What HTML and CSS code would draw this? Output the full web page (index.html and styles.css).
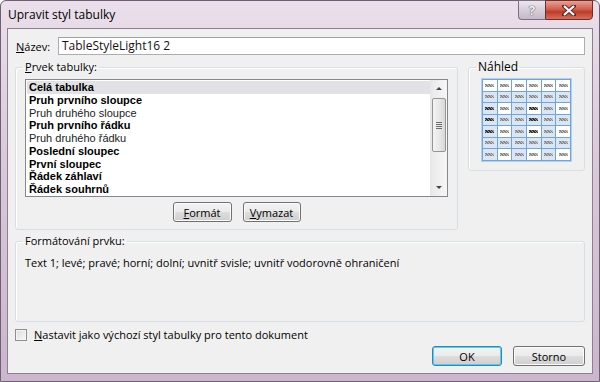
FILE: index.html
```html
<!DOCTYPE html>
<html lang="cs">
<head>
  <meta charset="UTF-8" />
  <title>Upravit styl tabulky</title>
  <link rel="stylesheet" href="styles.css">
</head>
<body>

  <div class="window">
    <div class="titlebar">
      <div class="title">Upravit styl tabulky</div>
      <div class="caption-buttons">
        <div class="cap-help">?</div>
        <div class="cap-close">
          <svg width="14" height="11" viewBox="0 0 14 11">
            <path d="M2 1 L12 10 M12 1 L2 10" stroke="#5b2a26" stroke-width="4" stroke-linecap="square"/>
            <path d="M2 1 L12 10 M12 1 L2 10" stroke="#ffffff" stroke-width="2.2"/>
          </svg>
        </div>
      </div>
    </div>

    <div class="client">
      <div class="name-row">
        <label class="name-label"><u>N</u>ázev:</label>
        <div class="text-input">TableStyleLight16 2</div>
      </div>

      <div class="groups-row">
        <fieldset class="group group-element">
          <legend><u>P</u>rvek tabulky:</legend>
          <div class="group-body">
            <div class="listbox">
              <div class="list-items">
                <div class="item bold selected">Celá tabulka</div>
                <div class="item bold">Pruh prvního sloupce</div>
                <div class="item">Pruh druhého sloupce</div>
                <div class="item bold">Pruh prvního řádku</div>
                <div class="item">Pruh druhého řádku</div>
                <div class="item bold">Poslední sloupec</div>
                <div class="item bold">První sloupec</div>
                <div class="item bold">Řádek záhlaví</div>
                <div class="item bold">Řádek souhrnů</div>
              </div>
              <div class="scrollbar">
                <div class="sb-arrow"><span class="tri-up"></span></div>
                <div class="sb-track">
                  <div class="sb-thumb">
                    <span></span><span></span><span></span><span></span>
                  </div>
                </div>
                <div class="sb-arrow"><span class="tri-down"></span></div>
              </div>
            </div>
            <div class="group-buttons">
              <button class="btn btn-small"><u>F</u>ormát</button>
              <button class="btn btn-small btn-wide"><u>V</u>ymazat</button>
            </div>
          </div>
        </fieldset>

        <fieldset class="group group-preview">
          <legend>Náhled</legend>
          <div class="preview" id="preview"></div>
        </fieldset>
      </div>

      <fieldset class="group group-format">
        <legend>Formátování prvku:</legend>
        <div class="format-text">Text 1; levé; pravé; horní; dolní; uvnitř svisle; uvnitř vodorovně ohraničení</div>
      </fieldset>

      <div class="check-row">
        <span class="checkbox"></span>
        <span><u>N</u>astavit jako výchozí styl tabulky pro tento dokument</span>
      </div>

      <div class="dialog-buttons">
        <button class="btn btn-ok">OK</button>
        <button class="btn btn-cancel">Storno</button>
      </div>
    </div>
  </div>

  <script>
    // 7 rows x 6 columns, 1 = light blue band
    const bands = [
      [0,0,0,0,0,0],
      [1,1,1,1,1,1],
      [1,0,1,0,1,0],
      [1,1,1,1,1,1],
      [1,0,1,0,1,0],
      [1,1,1,1,1,1],
      [1,0,1,0,1,0]
    ];
    const preview = document.getElementById('preview');
    bands.forEach(function (row, r) {
      row.forEach(function (band, c) {
        const cell = document.createElement('div');
        cell.className = band ? 'cell band' : 'cell';
        const dots = document.createElement('span');
        // darker sample text in the middle rows, like the reference
        dots.className = (r >= 2 && r <= 4 && c % 3 === 0) ? 'dots dark' : 'dots';
        cell.appendChild(dots);
        preview.appendChild(cell);
      });
    });
  </script>

</body>
</html>
```

FILE: styles.css
```css
* { margin: 0; padding: 0; box-sizing: border-box; }

body {
  font-family: 'Open Sans', 'DejaVu Sans', sans-serif;
  font-size: 11px;
  color: #000;
  width: 600px;
  height: 382px;
  overflow: hidden;
}

.window {
  width: 600px;
  height: 382px;
  background: linear-gradient(#ebdfeb, #dacada 40%, #cbb6cd);
  border: 1px solid #6e6072;
  border-radius: 6px 6px 0 0;
  display: flex;
  flex-direction: column;
}

/* Title bar */
.titlebar {
  height: 27px;
  display: flex;
  justify-content: space-between;
  align-items: flex-start;
}

.title {
  font-size: 12px;
  padding: 5px 0 0 7px;
  color: #000;
}

.caption-buttons {
  display: flex;
  margin-top: -1px;
  margin-right: 6px;
}

.cap-help {
  width: 27px;
  height: 20px;
  border: 1px solid #7d6f80;
  border-right: none;
  border-radius: 0 0 0 4px;
  background: linear-gradient(#ece6ee, #d8cdda 50%, #c6b8c9);
  color: #f6f6f6;
  font-weight: bold;
  font-size: 13px;
  line-height: 18px;
  text-align: center;
  text-shadow: 0 0 1px #444, 0 0 1px #444;
}

.cap-close {
  width: 48px;
  height: 20px;
  border: 1px solid #6d2d28;
  border-radius: 0 0 4px 0;
  background: linear-gradient(#e7a196, #d2604f 45%, #c03a28 60%, #d2705c);
  display: flex;
  align-items: center;
  justify-content: center;
}

/* Client area */
.client {
  margin: 0 6px;
  height: 346px;
  background: #f0f0f0;
  border: 1px solid #8e7f93;
  padding: 0 7px;
  display: flex;
  flex-direction: column;
}

.name-row {
  display: flex;
  align-items: center;
  margin-top: 8px;
  height: 18px;
}

.name-label {
  width: 43px;
  padding-left: 1px;
}

.text-input {
  flex: 1;
  height: 18px;
  background: #fff;
  border: 1px solid #abadb3;
  border-top-color: #9ea0a7;
  padding: 0 3px;
  line-height: 16px;
  font-size: 12px;
  color: #1a0f14;
}

/* Group boxes */
.groups-row {
  display: flex;
  align-items: flex-start;
  gap: 10px;
  margin-top: 5px;
}

.group {
  border: 1px solid #d5dfe5;
  border-radius: 3px;
  box-shadow: inset 1px 1px 0 #fff;
  padding: 0;
}

.group legend {
  margin-left: 7px;
  padding: 0 2px;
  line-height: 14px;
  color: #000;
}

.group-element {
  width: 443px;
}

.group-body {
  padding: 5px 9px 7px 9px;
}

.group-preview {
  width: 117px;
  padding-top: 5px;
  padding-bottom: 9px;
}

.group-preview legend {
  font-size: 12px;
  margin-left: 7px;
}

/* List box */
.listbox {
  height: 118px;
  border: 1px solid #828790;
  background: #fff;
  display: flex;
}

.list-items {
  flex: 1;
  padding: 1px 0 0 1px;
}

.item {
  font-family: 'Liberation Sans', Arial, sans-serif;
  height: 12.75px;
  line-height: 12.75px;
  padding-left: 2px;
  color: #222;
}

.item.bold {
  font-weight: bold;
  color: #000;
}

.item.selected {
  background: #e1e1e6;
}

.scrollbar {
  width: 17px;
  border-left: 1px solid #e6e6e6;
  background: linear-gradient(90deg, #e9e9e9, #f6f6f6);
  display: flex;
  flex-direction: column;
}

.sb-arrow {
  height: 17px;
  display: flex;
  align-items: center;
  justify-content: center;
}

.tri-up, .tri-down {
  width: 0;
  height: 0;
  border-left: 3px solid transparent;
  border-right: 3px solid transparent;
}

.tri-up { border-bottom: 3px solid #444; }
.tri-down { border-top: 3px solid #444; }

.sb-track {
  flex: 1;
  padding: 1px 0 0 0;
}

.sb-thumb {
  height: 54px;
  margin: 0 1px;
  border: 1px solid #959595;
  border-radius: 2px;
  background: linear-gradient(90deg, #f3f3f3, #e8e8e8 50%, #d8d8d8);
  display: flex;
  flex-direction: column;
  align-items: center;
  justify-content: center;
  gap: 1px;
}

.sb-thumb span {
  width: 6px;
  height: 1px;
  background: #6e6e6e;
}

.group-buttons {
  display: flex;
  justify-content: center;
  gap: 11px;
  margin-top: 5px;
}

/* Buttons */
.btn {
  font-family: inherit;
  font-size: 11px;
  color: #000;
  height: 20px;
  border: 1px solid #707070;
  border-radius: 3px;
  background: linear-gradient(#f2f2f2, #ebebeb 50%, #dddddd 51%, #cfcfcf);
  box-shadow: inset 0 0 0 1px #fbfbfb;
}

.btn-small { width: 59px; }
.btn-wide { width: 58px; }

.group-format {
  margin-top: 4px;
}

.format-text {
  height: 58px;
  line-height: 14px;
  margin: 8px 3px 7px 9px;
}

/* Preview grid */
.preview {
  width: 89px;
  margin: 0 auto;
  display: grid;
  grid-template-columns: repeat(6, 1fr);
  grid-auto-rows: 10.5px;
  gap: 1px;
  padding: 1px;
  background: #72a3d9;
  box-shadow: 0 0 0 1px #b3cfee;
}

.cell {
  background: #fff;
  display: flex;
  align-items: center;
  justify-content: center;
}

.cell.band {
  background: #d9e6f5;
}

.dots {
  width: 9px;
  height: 3px;
  background:
    repeating-linear-gradient(45deg, #8a8a8a 0 1px, transparent 1px 2px),
    #c4c4c4;
}

.dots.dark {
  background:
    repeating-linear-gradient(45deg, #333 0 1px, transparent 1px 2px),
    #999;
}

/* Checkbox row */
.check-row {
  display: flex;
  align-items: center;
  gap: 7px;
  margin-top: 6px;
  height: 13px;
}

.checkbox {
  width: 12px;
  height: 12px;
  border: 1px solid #8e8f8f;
  background: linear-gradient(135deg, #dcdcdc, #f8f8f8);
  box-shadow: inset 0 0 0 1px #f4f4f4;
}

.dialog-buttons {
  display: flex;
  justify-content: flex-end;
  gap: 11px;
  margin-top: 5px;
}

.btn-ok {
  width: 70px;
  border-color: #3c7fb1;
  box-shadow: inset 0 0 0 1px #48d5f5;
}

.btn-cancel {
  width: 72px;
}
```
